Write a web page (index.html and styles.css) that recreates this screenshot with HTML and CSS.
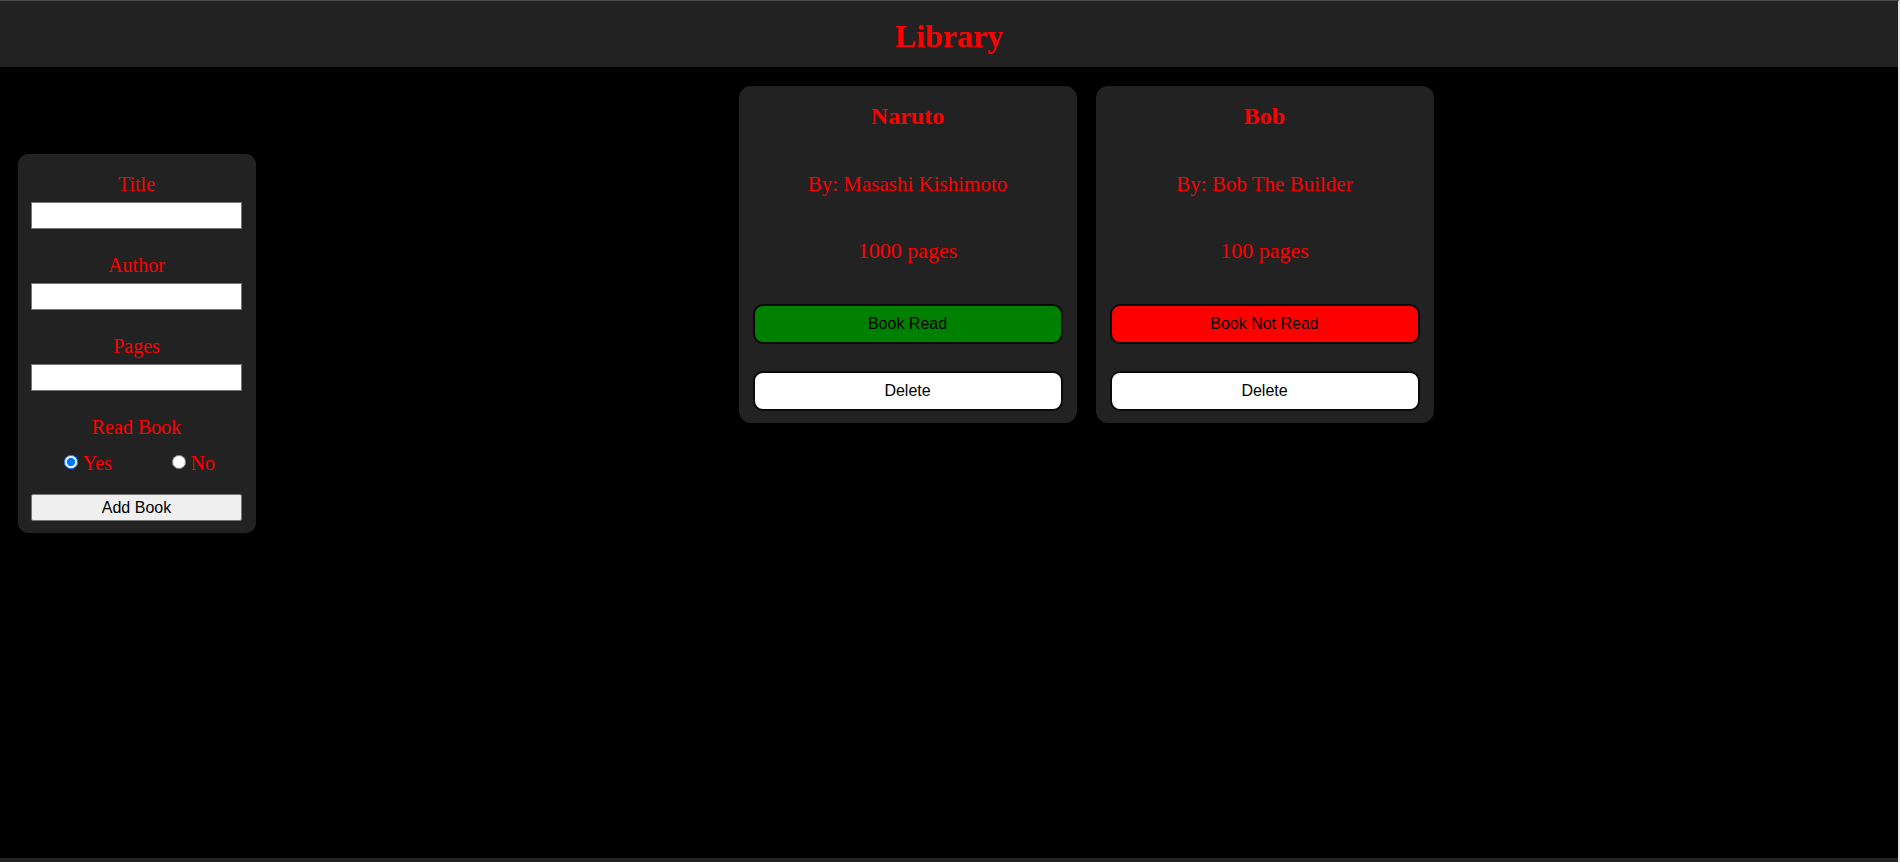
FILE: index.html
```html
<!DOCTYPE html>
<html lang="en">
<head>
<meta charset="utf-8">
<title>Library</title>
<link rel="stylesheet" href="styles.css">
</head>
<body>
<div class="page">
  <header class="topbar">
    <h1 class="brand">Library</h1>
  </header>
  <main class="content">
    <form class="book-form">
      <label class="field-label" for="title">Title</label>
      <input class="field-input" id="title" type="text">
      <label class="field-label" for="author">Author</label>
      <input class="field-input" id="author" type="text">
      <label class="field-label" for="pages">Pages</label>
      <input class="field-input" id="pages" type="text">
      <div class="field-label">Read Book</div>
      <div class="radio-row">
        <label class="radio-opt"><input class="radio" type="radio" name="read" checked><span>Yes</span></label>
        <label class="radio-opt"><input class="radio" type="radio" name="read"><span>No</span></label>
      </div>
      <button class="add-btn" type="button">Add Book</button>
    </form>
    <section class="library">
      <article class="card">
        <h2 class="card-title">Naruto</h2>
        <p class="card-author">By: Masashi Kishimoto</p>
        <p class="card-pages">1000 pages</p>
        <button class="card-btn status read" type="button">Book Read</button>
        <button class="card-btn delete" type="button">Delete</button>
      </article>
      <article class="card">
        <h2 class="card-title">Bob</h2>
        <p class="card-author">By: Bob The Builder</p>
        <p class="card-pages">100 pages</p>
        <button class="card-btn status unread" type="button">Book Not Read</button>
        <button class="card-btn delete" type="button">Delete</button>
      </article>
    </section>
  </main>
  <footer class="bottombar"></footer>
</div>
</body>
</html>
```

FILE: styles.css
```css
html, body {
  margin: 0;
  padding: 0;
  background: #000;
}

body {
  font-family: "Liberation Serif", "Times New Roman", serif;
  color: #ff0000;
}

.page {
  height: 862px;
  box-sizing: border-box;
  border-top: 1px solid #4d4d4d;
  border-right: 2px solid #e4e4e4;
  display: flex;
  flex-direction: column;
}

.topbar {
  height: 66px;
  box-sizing: border-box;
  padding-top: 4px;
  background: #222222;
  flex: none;
}

.brand {
  margin: 0;
  font-size: 32px;
  line-height: 62px;
  font-weight: bold;
  text-align: center;
  color: #ff0000;
}

.content {
  flex: 1;
  display: flex;
  align-items: flex-start;
}

.bottombar {
  height: 4px;
  background: #232323;
  flex: none;
}

/* form */
.book-form {
  width: 238px;
  box-sizing: border-box;
  margin: 87px 18px 0 18px;
  padding: 18px 14px 12px 13px;
  background: #222222;
  border-radius: 10px;
  display: flex;
  flex-direction: column;
}

.field-label {
  display: block;
  font-size: 20px;
  line-height: 24px;
  text-align: center;
  color: #ff0000;
}

.field-input {
  display: block;
  width: 211px;
  height: 27px;
  box-sizing: border-box;
  margin: 6px 0 24px 0;
  padding: 1px 3px;
  border: 1px solid #767676;
  border-radius: 0;
  background: #fff;
  font-size: 14px;
}

.radio-row {
  margin-top: 12px;
  display: grid;
  grid-template-columns: 1fr 1fr;
  height: 24px;
}

.radio-opt {
  display: flex;
  justify-content: center;
  align-items: center;
  padding-left: 8px;
  font-size: 20px;
  line-height: 24px;
  color: #ff0000;
}

.radio {
  width: 14px;
  height: 14px;
  margin: 0 5px 3px 0;
}

.add-btn {
  margin-top: 19px;
  width: 211px;
  height: 27px;
  box-sizing: border-box;
  border: 1px solid #767676;
  border-radius: 2px;
  background: #efefef;
  color: #000;
  font-family: "Liberation Sans", Arial, sans-serif;
  font-size: 16px;
  padding: 0;
}

/* library cards */
.library {
  flex: 1;
  display: flex;
  justify-content: center;
  gap: 19px;
  margin-top: 19px;
}

.card {
  width: 338px;
  box-sizing: border-box;
  padding: 14px 14px 12px 14px;
  background: #222222;
  border-radius: 12px;
  display: flex;
  flex-direction: column;
  text-align: center;
}

.card-title {
  margin: 2px 0 0 0;
  font-size: 24px;
  line-height: 28px;
  font-weight: bold;
  color: #ff0000;
}

.card-author {
  margin: 42px 0 0 0;
  font-size: 21px;
  line-height: 24px;
}

.card-pages {
  margin: 42px 0 0 0;
  font-size: 22px;
  line-height: 26px;
}

.card-btn {
  height: 40px;
  width: 100%;
  box-sizing: border-box;
  border: 2px solid #0a0a0a;
  border-radius: 10px;
  font-family: "Liberation Sans", Arial, sans-serif;
  font-size: 16px;
  color: #000;
  padding: 0;
}

.status {
  margin-top: 40px;
}

.read {
  background: #008000;
}

.unread {
  background: #ff0000;
}

.delete {
  margin-top: 27px;
  background: #ffffff;
}
```
